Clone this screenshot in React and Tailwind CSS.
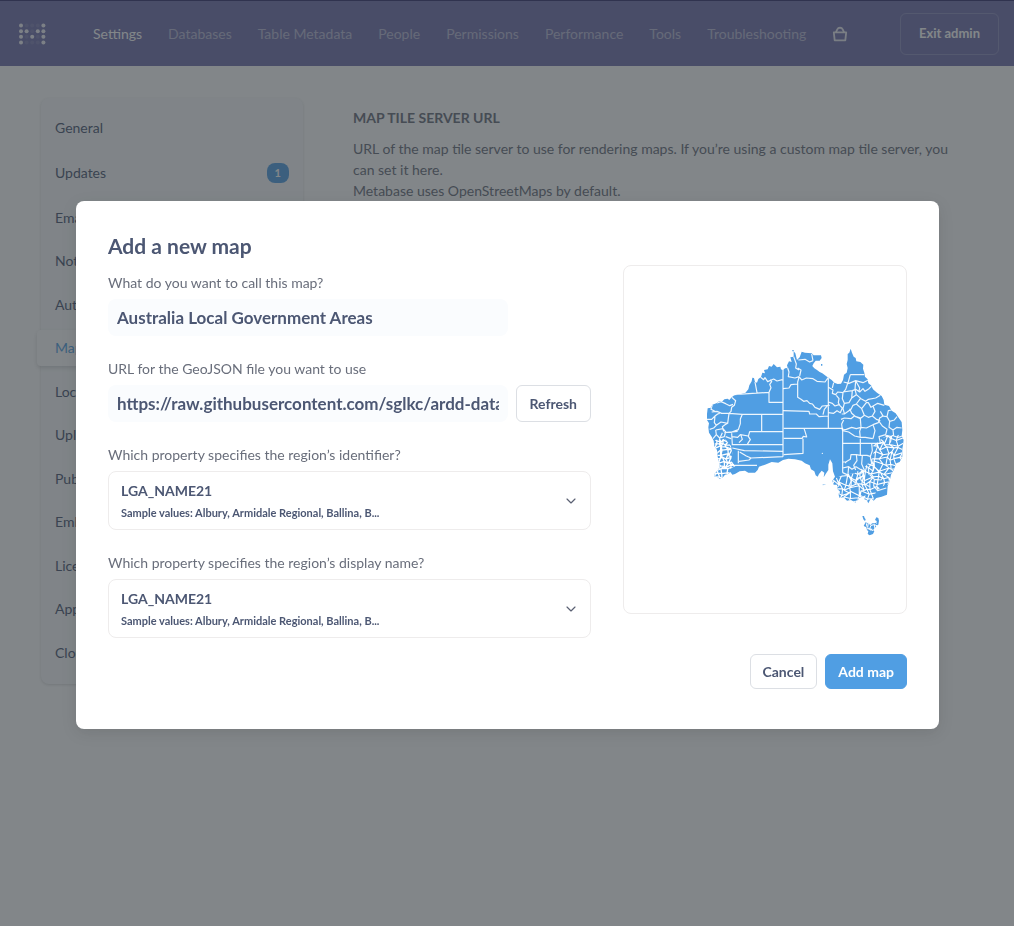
import React from "react";
import { ChevronDown } from "lucide-react";

const NAV = [
  "Settings",
  "Databases",
  "Table Metadata",
  "People",
  "Permissions",
  "Performance",
  "Tools",
  "Troubleshooting",
];

const SECTIONS = [
  "General",
  "Updates",
  "Email",
  "Notifications",
  "Authentication",
  "Maps",
  "Localization",
  "Uploads",
  "Public Sharing",
  "Embedding",
  "License",
  "Appearance",
  "Cloud",
];

const LOGO_ROWS = ["10001", "11011", "10101", "10001"];

function Logo() {
  return (
    <svg width="28" height="22" viewBox="0 0 28 22" role="img" aria-label="Metabase">
      {LOGO_ROWS.map((row, r) =>
        row.split("").map((on, c) => (
          <circle
            key={`${r}-${c}`}
            cx={3 + c * 5.6}
            cy={2.6 + r * 5.6}
            r="2"
            fill="#fff"
            opacity={on === "1" ? 0.9 : 0.1}
          />
        )),
      )}
    </svg>
  );
}

function BagIcon() {
  return (
    <svg width="16" height="16" viewBox="0 0 16 16" fill="none" stroke="#fff" strokeOpacity="0.85" strokeWidth="1.8" strokeLinejoin="round" aria-hidden="true">
      <path d="M1.800 6.400h12.400l-.9 8h-10.600z" />
      <path d="M4 6.200L5.300 3.300C6.300 1.200 9.700 1.200 10.700 3.300L12 6.200" />
    </svg>
  );
}

function Header() {
  return (
    <header className="flex h-[66px] items-center border-t border-[#33306f] bg-[#7172ad] pr-[15px] pl-[18px] text-sm text-white">
      <Logo />
      <nav className="ml-[47px] flex items-center gap-[26px]">
        {NAV.map((item, i) => (
          <a key={item} href="#" className={i === 0 ? "whitespace-nowrap" : "whitespace-nowrap text-white/50"}>
            {item}
          </a>
        ))}
        <a href="#" aria-label="Store">
          <BagIcon />
        </a>
      </nav>
      <button className="ml-auto h-[42px] rounded-md border border-white/20 px-[18px] text-[13px] font-bold whitespace-nowrap">
        Exit admin
      </button>
    </header>
  );
}

function Sidebar() {
  return (
    <aside className="w-[262px] shrink-0 self-start rounded-lg bg-[#f9fbfc] pt-2 pb-2.5 shadow-[0_1px_3px_rgba(0,0,0,0.15)]">
      <ul>
        {SECTIONS.map((item) => {
          if (item === "Maps") {
            return (
              <li key={item} className="-mx-1 my-1">
                <a href="#" className="block rounded bg-white py-[9px] pl-[18px] text-sm leading-tight text-[#509ee3] shadow-[0_2px_4px_rgba(0,0,0,0.15)]">
                  {item}
                </a>
              </li>
            );
          }
          return (
            <li key={item}>
              <a href="#" className="flex items-center justify-between py-[13px] pr-3.5 pl-3.5 text-sm leading-tight">
                {item}
                {item === "Updates" && (
                  <span className="rounded-lg bg-[#509ee3] px-2 py-0.5 text-[11px] leading-4 font-bold text-white">
                    1
                  </span>
                )}
              </a>
            </li>
          );
        })}
      </ul>
    </aside>
  );
}

/* Irregular cells for the small, densely packed council areas. */
function mesh(x0, y0, cols, rows, size, seed) {
  const pt = (c, r) => {
    const a = Math.sin(c * 12.9 + r * 78.2 + seed) * 43758.5;
    const b = Math.sin(c * 39.3 + r * 11.1 + seed * 2) * 24634.6;
    const jx = (a - Math.floor(a) - 0.5) * size * 1.2;
    const jy = (b - Math.floor(b) - 0.5) * size * 1.2;
    return `${(x0 + c * size + jx).toFixed(1)} ${(y0 + r * size + jy).toFixed(1)}`;
  };
  let d = "";
  for (let r = 0; r < rows; r++) {
    for (let c = 0; c < cols; c++) {
      d += `M${pt(c, r)}L${pt(c + 1, r)}M${pt(c, r)}L${pt(c, r + 1)}`;
    }
  }
  return d;
}

const MAINLAND =
  "M38 205L48 203 52 194 66 189 72 184 80 186 88 178 98 176 103 180 110 172 118 166 150 160 160 148 163 136 170 124 172 113 177 114 180 126 186 128 190 117 198 111 202 98 210 100 207 90 218 88 222 78 230 80 236 72 246 82 256 80 258 88 264 91 270 85 278 84 276 76 282 64 290 66 286 52 296 50 296 34 301 40 306 60 314 52 320 35 330 38 350 40 356 46 378 46 380 54 374 62 362 62 356 70 352 78 358 85 366 90 374 96 382 100 398 112 410 120 418 128 428 132 438 131 444 120 447 104 455 98 458 84 455 72 458 60 458 42 463 38 467 26 471 38 476 50 482 54 484 64 496 66 505 74 504 86 508 98 510 110 518 118 520 130 528 136 534 148 546 158 560 168 566 180 568 194 582 198 590 212 602 220 610 232 620 246 622 270 620 288 626 300 622 330 622 350 614 366 604 370 596 390 588 404 584 424 578 438 576 464 560 470 544 474 536 482 528 474 520 490 515 480 508 478 512 466 502 470 492 474 490 480 482 482 482 488 468 480 456 482 446 472 434 474 430 462 436 456 428 448 426 434 416 434 412 422 420 410 414 394 412 370 405 358 400 374 400 390 392 402 386 412 388 398 380 392 372 402 368 410 362 406 358 394 348 388 344 376 330 370 320 362 300 358 280 356 264 360 250 368 230 366 210 374 192 380 188 390 180 398 160 398 150 392 134 394 120 402 112 404 106 396 100 402 90 404 84 412 74 416 66 410 58 410 60 398 68 392 74 380 72 366 68 350 66 330 58 318 56 302 50 290 42 278 40 262 42 250 36 240 36 222Z";

const REGION_LINES = [
  // Western Australia
  "M264 88V350M116 164L222 157M196 111l10 8 4-6 8 12 18-8 10 6 16-4M222 157V187H264M222 157l6-14-4-10 6-8-4-6M180 126l6 32M110 172l12 10-4 14-8 6-2 12-6 6M102 220l40 3H264M200 223V275M264 275H164l-4 14 6 10-8 12 4 4M142 223l-6 14 0 14-6 18-22 8M110 314H264M112 324l36 8 116 2M130 332V370M134 336l20 12 14 6 96-4M168 354l-6 6-30 4M106 376l80 0M50 216l16-2 14 6 22 0M52 194l-4 14 16 8M66 189l12-4 14 6 12 6 10-4M102 220l-4 30-8 4-8 6 4 14M60 228l8-6 6-2M60 228l-10 10-14 0M60 228l-2 20 6 8-8 8-12 4M64 256l14-10 20 4M62 270l2 14-10 12M62 270l22-4 8 10-4 14-14 4-10-10M88 278l40-4M110 280l2 34M92 290l16 6M160 288l-24-4-8 8-16-2M138 286l4 12-10 10M82 278l-8 18 0 20",
  // Northern Territory and South Australia
  "M278 84l4 12-2 14 20 4 12-4M312 110l8 10 14-6 20 2 12 8 24 2 10-14M308 84l10 6-4 18M312 112l-4 14v46l10 6 8 6 10-2 8 8 8 2 8 10 14 6 8-10 22-2M264 146l18-2 6-10 20-2M264 212L342 214l2 8 20 0 8 8 28-2M266 265H443V398M327 265l4 12 4 14-10-2-4 6H266M324 296V340L266 344M400 112V263M310 60l20-2 14 8 10-4M350 42l4 20M296 50l8 22-2 12 10 6M398 196l-10 12-4 16",
  // Queensland
  "M466 104H508M400 142l14 8-2 10 10 4 6-8 16 2 8-10 6-18M416 128l-4 16M446 126l16 4 20-8 22 6 16-8M466 104l-4 14-4 14M400 186l12 4 8 8 12-4 10 10-6 14-10-6-10 8-16-2M424 166l8 10-2 12 4 8M444 158l-2 18 6 14 14-2 8-14 2-22-28 4M472 152l10-4 12 8 10-10 6 8 12-8 8-8M470 174l14-10 14 12 14 8 8-6 22-4 14-8M484 164l-4-16 2-26M482 122l12 22-2 10M496 176l-12 16-10 4-6 12-20 14-8 0M448 190l-4 16 4 14M484 192l16 14 8 20-10 8-16-4-12-10-6-14M500 206l14-18 6 0 8 14 20-12 20 6M508 226l12 6 12-4 8-14-6-16M438 238l10-4 20 2 10-8 18 8 2 26-14 4-14-4-16 6-12 2-2-18 6-12M443 272l18 4 18 12 18 4 14 0 22 4M498 262l-4 12 2 20M498 262l16 2 20-10 16-6 4-14 10-6-8-14M534 254l6 18-6 24M552 244l10 14 14 10-4 16-20 6 4 18M532 228l12 10 12 4M560 228l16 2 8 14 14-4 8-10M576 230l4-18 10-2M584 244l-2 18 12 8 12-8 14 2M594 270l2 18 14 4 12-4M572 286l18 4-4 18",
  // New South Wales and Victoria
  "M443 310H560M496 296V346M530 310l2 22-6 18 4 20-10 14 2 20M496 346l-12-2-16 0-2 14-14 8-8 0M496 346l20 0 12 4M484 344l2 18-10 14 6 14M443 384l18-4 10 8 12-8 20 12M502 346l-2 26 8 18-6 20-14 4-8 18M461 380l-2 22 12 18 10 8M443 398l18 8 8 16-8 18M508 390l-14 14 4 16 12 12 14 8M524 404l14 14-2 20 12 14 26-8M538 418l20 2 6-8",
];

const SW_CLIP = "M60 300L90 296 108 318 112 340 108 362 122 378 104 388 104 410 50 420Z";
const SE_CLIP =
  "M534 318L560 296 580 284 632 284 632 370 590 440 574 432 544 452 530 494 460 494 424 480 410 420 446 404 478 400 510 380 536 350Z";

const ISLANDS =
  "M502 528l5 0 2 6 3 4-2 6-5-6zM512 546l8 2 6 6 6-4 8 0 6-6-6-4 4-8 6 2 2 8-2 12-6 4-4 6-6 6 4 4-4 8-10 4-6-4 2-8-4-4-2-8-8-4zM382 434l12-2-10 4zM292 30h4v4h-4zM378 72h4v5h-4zM520 576l14-2-2 8-8 2z";
const ISLAND_LINES = "M508 544l12 4 8 8 10-2 10 4M528 556l-4 10 10 6M538 554l2 14M516 566l16 2M514 550l2 10M540 546l6 4M520 548l-2 14 10 10";

function AustraliaMap() {
  return (
    <svg viewBox="0 0 282 347" className="block h-auto w-full" role="img" aria-label="Map of Australia">
      <defs>
        <clipPath id="land"><path d={MAINLAND} /></clipPath>
        <clipPath id="south-west"><path d={SW_CLIP} /></clipPath>
        <clipPath id="south-east"><path d={SE_CLIP} /></clipPath>
      </defs>
      <g transform="translate(71 74) scale(0.33333)" fill="none" stroke="#fff" strokeLinejoin="round">
        <path d={MAINLAND} fill="#509ee3" stroke="none" />
        <g clipPath="url(#land)">
          {REGION_LINES.map((d) => (
            <path key={d} d={d} strokeWidth="3.6" strokeOpacity="0.9" />
          ))}
          <path d={mesh(40, 290, 9, 12, 11, 3)} clipPath="url(#south-west)" strokeWidth="4" />
          <path d={mesh(410, 280, 15, 15, 15, 7)} clipPath="url(#south-east)" strokeWidth="3.3" />
        </g>
        <path d={ISLANDS} fill="#509ee3" stroke="none" />
        <path d={ISLAND_LINES} strokeWidth="3" />
        <g fill="#fff" stroke="none">
          <circle cx="382" cy="340" r="2" />
          <circle cx="452" cy="368" r="2" />
        </g>
      </g>
    </svg>
  );
}

function PropertySelect({ id, label }) {
  return (
    <div>
      <label htmlFor={id} className="block leading-5 text-[#696e7b]">{label}</label>
      <div className="relative mt-1.5 flex h-[59px] items-center justify-between rounded-lg border border-[#eeecec] pr-[11px] pl-3 font-bold focus-within:border-[#509ee3]">
        <div aria-hidden="true">
          <div className="leading-5">LGA_NAME21</div>
          <div className="mt-1 text-[11px] leading-4">Sample values: Albury, Armidale Regional, Ballina, B...</div>
        </div>
        <ChevronDown className="size-4 text-[#5a6072]" strokeWidth={1.75} aria-hidden="true" />
        <select id={id} className="absolute inset-0 cursor-pointer opacity-0">
          <option>LGA_NAME21</option>
        </select>
      </div>
    </div>
  );
}

const INPUT =
  "h-[37px] min-w-0 rounded-lg bg-[#fafcfe] px-[9px] text-[17px] font-bold text-[#4c5773] outline-none focus:ring-1 focus:ring-[#509ee3]";

function AddMapDialog() {
  return (
    <div role="dialog" aria-modal="true" aria-labelledby="dialog-title" className="w-full rounded-lg bg-white px-8 pt-8 pb-10 text-sm text-[#4c5773] shadow-[0_4px_16px_rgba(0,0,0,0.1)]">
      <div className="flex gap-8">
        <form className="min-w-0 flex-1">
          <h2 id="dialog-title" className="mb-3.5 text-[21px] leading-[26px] font-bold">Add a new map</h2>
          <div className="flex flex-col gap-[23px]">
            <div>
              <label htmlFor="map-name" className="block leading-5 text-[#696e7b]">What do you want to call this map?</label>
              <input id="map-name" type="text" defaultValue="Australia Local Government Areas" className={`${INPUT} mt-1.5 block w-full max-w-[400px]`} />
            </div>
            <div>
              <label htmlFor="map-url" className="block leading-5 text-[#696e7b]">URL for the GeoJSON file you want to use</label>
              <div className="mt-1.5 flex gap-2">
                <input id="map-url" type="text" defaultValue="https://raw.githubusercontent.com/sglkc/ardd-data-visualization/main/lga.geojson" className={`${INPUT} flex-1`} />
                <button type="button" className="rounded-md border border-[#dcdfe4] px-[13px] font-bold">Refresh</button>
              </div>
            </div>
            <PropertySelect id="region-id" label="Which property specifies the region’s identifier?" />
            <PropertySelect id="region-name" label="Which property specifies the region’s display name?" />
          </div>
        </form>
        <div className="mt-8 w-[284px] shrink-0 self-start overflow-hidden rounded-lg border border-[#eeecec]">
          <AustraliaMap />
        </div>
      </div>
      <div className="mt-4 flex justify-end gap-2">
        <button className="h-[35px] rounded-md border border-[#dcdfe4] px-3 font-bold">Cancel</button>
        <button className="h-[35px] rounded-md border border-[#509ee3] bg-[#509ee3] px-3 font-bold text-white">Add map</button>
      </div>
    </div>
  );
}

export default function App() {
  return (
    <div className="min-h-screen bg-white font-[Lato,sans-serif] text-[#4c5773]">
      <Header />
      <main className="flex gap-[50px] pt-8 pr-[60px] pl-[41px]">
        <Sidebar />
        <section className="min-w-0 flex-1 pt-2.5 text-sm text-[#696e7b]">
          <h1 className="leading-5 font-bold uppercase">Map tile server URL</h1>
          <p className="mt-2.5 leading-[21px]">
            URL of the map tile server to use for rendering maps. If you’re using a custom map tile server, you can set it here.
            <br />
            Metabase uses OpenStreetMaps by default.
          </p>
        </section>
      </main>
      <div className="fixed inset-0 flex items-center bg-[#2e353b]/60 pt-1 pr-[75px] pl-[76px]">
        <AddMapDialog />
      </div>
    </div>
  );
}
